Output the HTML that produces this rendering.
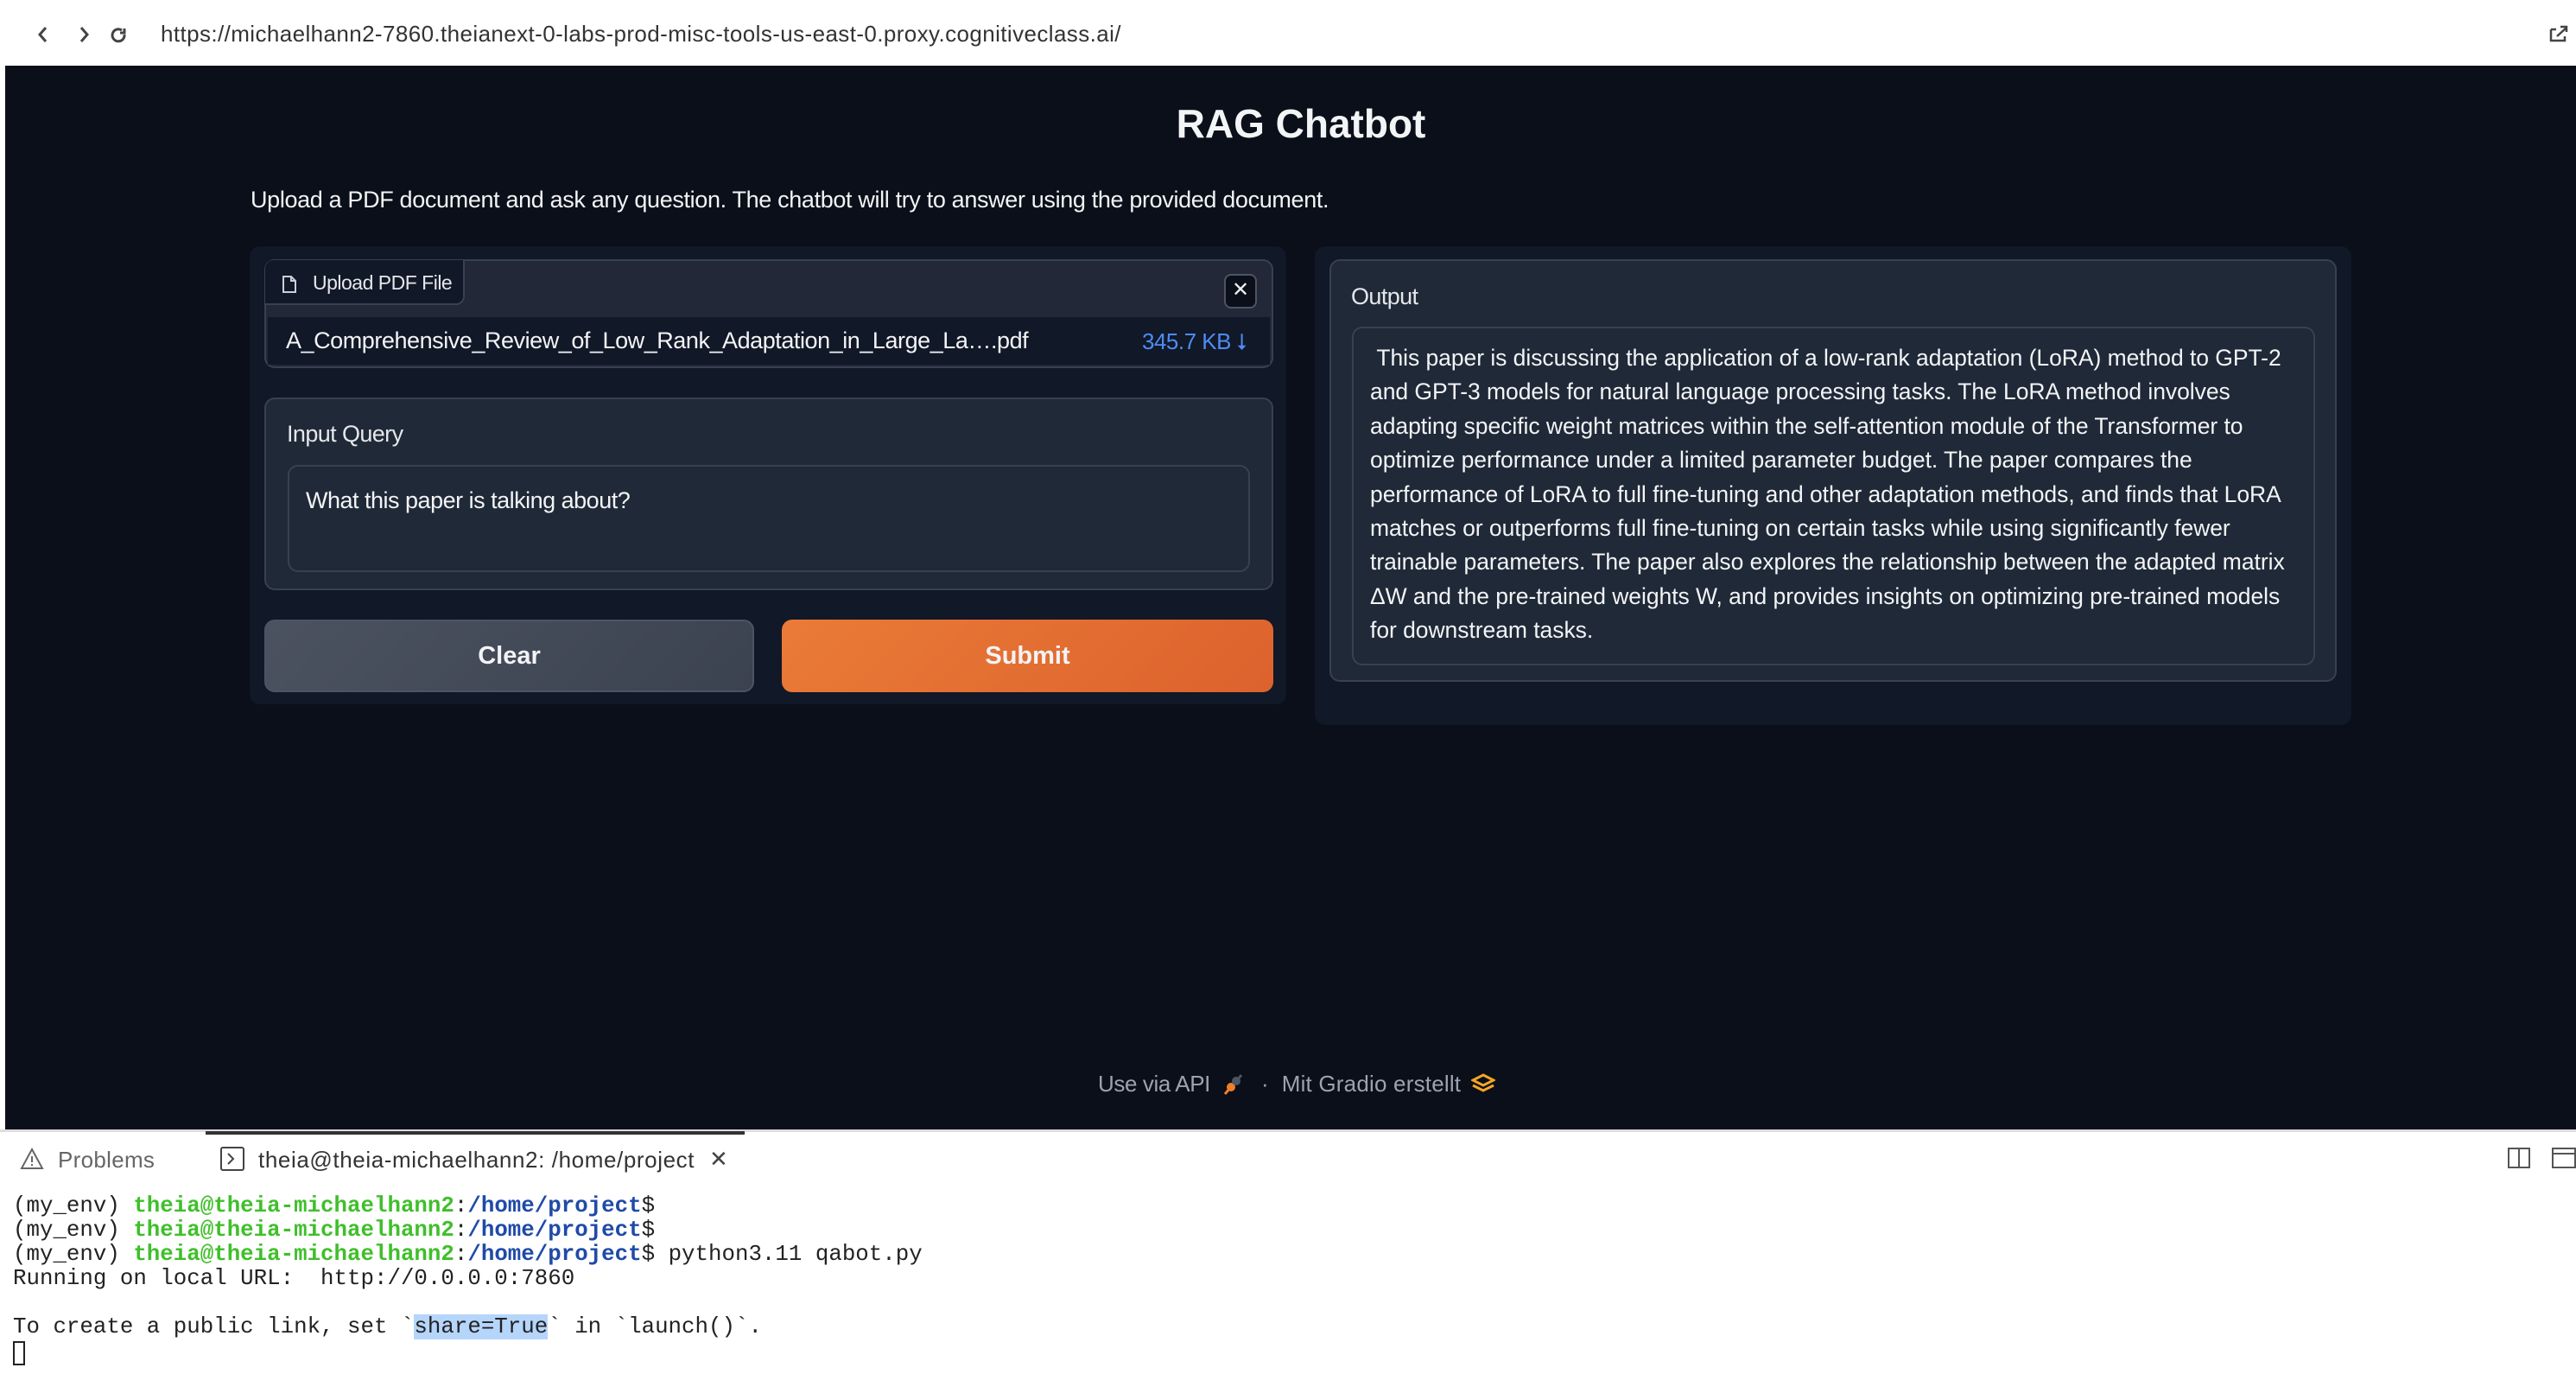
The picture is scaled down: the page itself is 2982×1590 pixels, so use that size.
<!DOCTYPE html>
<html><head><meta charset="utf-8"><style>
*{box-sizing:border-box;margin:0;padding:0}
body{width:2982px;height:1590px;background:#fff;position:relative;overflow:hidden;font-family:"Liberation Sans",sans-serif}
.a{position:absolute}
.dark{left:6px;top:76px;width:2976px;height:1231px;background:#0b0f19}
.t{white-space:nowrap;color:#f3f4f6}
.panel{background:#111827;border-radius:12px}
.block{background:#1f2937;border:2px solid #374151;border-radius:12px}
.ta{background:#1f2937;border:2px solid #374151;border-radius:12px}
.mono{font-family:"Liberation Mono",monospace;font-size:25.8px;white-space:pre;color:#222;line-height:28px}
.g{color:#3fbf2a;font-weight:bold}.b{color:#1f4aa8;font-weight:bold}
</style></head><body>
<svg class="a" style="left:38px;top:28px" width="120" height="24" viewBox="0 0 120 24" fill="none" stroke="#444" stroke-width="3"><path d="M15 4 L8 12 L15 20"/><path d="M56 4 L63 12 L56 20"/><path d="M103 7 a7 7 0 1 0 3 5"/><path d="M106 5 v5 h-5"/></svg>
<div class="a t" style="left:186px;top:24px;font-size:26px;color:#333;letter-spacing:0.4px">https://michaelhann2-7860.theianext-0-labs-prod-misc-tools-us-east-0.proxy.cognitiveclass.ai/</div>
<svg class="a" style="left:2950px;top:28px" width="24" height="22" fill="none" stroke="#444" stroke-width="2.5"><path d="M3 6h6M3 6v13h16v-5"/><path d="M10 14 L21 4 M14 3h7v6"/></svg>

<div class="a dark"></div>
<div class="a t" style="left:0;width:3012px;text-align:center;top:116px;font-size:46px;font-weight:bold">RAG Chatbot</div>
<div class="a t" style="left:290px;top:216px;font-size:27px;letter-spacing:-0.35px">Upload a PDF document and ask any question. The chatbot will try to answer using the provided document.</div>

<div class="a panel" style="left:289px;top:285px;width:1200px;height:530px"></div>
<div class="a block" style="left:306px;top:300px;width:1168px;height:126px;background:#222837"></div>
<div class="a" style="left:307px;top:301px;width:231px;height:52px;background:#111827;border:2px solid #374151;border-top:none;border-left:none;border-radius:10px 0 10px 0"></div>
<svg class="a" style="left:326px;top:318px" width="18" height="22" fill="none" stroke="#cbd0d8" stroke-width="2"><path d="M2 2h9l5 5v13H2z M11 2v5h5"/></svg>
<div class="a t" style="left:362px;top:314px;font-size:23px;color:#e5e7eb;letter-spacing:-0.5px">Upload PDF File</div>
<div class="a" style="left:1417px;top:317px;width:38px;height:40px;background:#0b0f19;border:2px solid #4b5563;border-radius:8px;color:#eee;font-size:24px;text-align:center;line-height:34px">✕</div>
<div class="a" style="left:310px;top:367px;width:1160px;height:55px;background:#111827"></div>
<div class="a t" style="left:331px;top:379px;font-size:27px;letter-spacing:-0.45px">A_Comprehensive_Review_of_Low_Rank_Adaptation_in_Large_La….pdf</div>
<div class="a t" style="left:1322px;top:380px;font-size:26px;color:#4d8cf5;letter-spacing:-0.5px">345.7 KB ⭣</div>

<div class="a block" style="left:306px;top:460px;width:1168px;height:223px"></div>
<div class="a t" style="left:332px;top:487px;font-size:27px;color:#e5e7eb;letter-spacing:-0.6px">Input Query</div>
<div class="a ta" style="left:333px;top:538px;width:1114px;height:124px"></div>
<div class="a t" style="left:354px;top:564px;font-size:27px;letter-spacing:-0.5px">What this paper is talking about?</div>

<div class="a" style="left:306px;top:717px;width:567px;height:84px;border-radius:12px;background:linear-gradient(135deg,#4b5260,#3b4250);border:2px solid #4b5563"></div>
<div class="a t" style="left:306px;width:567px;text-align:center;top:743px;font-size:29px;font-weight:bold">Clear</div>
<div class="a" style="left:905px;top:717px;width:569px;height:84px;border-radius:12px;background:linear-gradient(135deg,#ea7b37,#dc622d)"></div>
<div class="a t" style="left:905px;width:569px;text-align:center;top:743px;font-size:29px;font-weight:bold">Submit</div>

<div class="a panel" style="left:1522px;top:285px;width:1200px;height:554px"></div>
<div class="a block" style="left:1539px;top:300px;width:1166px;height:489px"></div>
<div class="a t" style="left:1564px;top:328px;font-size:27px;color:#e5e7eb;letter-spacing:-0.6px">Output</div>
<div class="a ta" style="left:1565px;top:378px;width:1115px;height:392px"></div>
<div class="a t" style="left:1586px;top:395px;font-size:26.5px;line-height:39.4px;letter-spacing:-0.05px">&nbsp;This paper is discussing the application of a low-rank adaptation (LoRA) method to GPT-2<br>and GPT-3 models for natural language processing tasks. The LoRA method involves<br>adapting specific weight matrices within the self-attention module of the Transformer to<br>optimize performance under a limited parameter budget. The paper compares the<br>performance of LoRA to full fine-tuning and other adaptation methods, and finds that LoRA<br>matches or outperforms full fine-tuning on certain tasks while using significantly fewer<br>trainable parameters. The paper also explores the relationship between the adapted matrix<br>ΔW and the pre-trained weights W, and provides insights on optimizing pre-trained models<br>for downstream tasks.</div>

<div class="a t" style="left:1271px;top:1239px;font-size:26px;color:#9ca3af;letter-spacing:-0.4px">Use via API</div>
<svg class="a" style="left:1414px;top:1242px" width="24" height="26"><path d="M4 24 L10 17" stroke="#f07f2a" stroke-width="3"/><circle cx="11" cy="16" r="5" fill="#f07f2a"/><circle cx="17" cy="9" r="5" fill="#4b5563"/><path d="M19 7 L23 2" stroke="#4b5563" stroke-width="3"/></svg>
<div class="a t" style="left:1460px;top:1239px;font-size:26px;color:#9ca3af;letter-spacing:0.2px">· &nbsp;Mit Gradio erstellt</div>
<svg class="a" style="left:1703px;top:1242px" width="28" height="24" fill="none" stroke="#f5a623" stroke-width="3"><path d="M14 2 L26 8 L14 14 L2 8Z"/><path d="M2 14 L14 20 L26 14"/></svg>

<div class="a" style="left:0;top:1307px;width:2982px;height:3px;background:#ddd"></div>
<div class="a" style="left:238px;top:1309px;width:624px;height:4px;background:#333"></div>
<svg class="a" style="left:23px;top:1328px" width="28" height="26" fill="none" stroke="#666" stroke-width="2"><path d="M14 2 L26 24 H2Z M14 10v7 M14 19v2"/></svg>
<div class="a t" style="left:67px;top:1327px;font-size:26px;color:#666;letter-spacing:0.3px">Problems</div>
<svg class="a" style="left:255px;top:1327px" width="28" height="28" fill="none" stroke="#444" stroke-width="2"><rect x="1" y="1" width="26" height="26" rx="2"/><path d="M9 8 L15 14 L9 20"/></svg>
<div class="a t" style="left:299px;top:1327px;font-size:26px;color:#333;letter-spacing:0.6px">theia@theia-michaelhann2: /home/project</div>
<div class="a t" style="left:821px;top:1326px;font-size:26px;color:#444">✕</div>
<svg class="a" style="left:2903px;top:1328px" width="79" height="24" fill="none" stroke="#555" stroke-width="2"><rect x="1" y="1" width="24" height="22"/><path d="M13 1v22"/><rect x="52" y="1" width="26" height="22"/><path d="M52 7h26"/></svg>

<div class="a mono" style="left:15px;top:1382px"><span>(my_env) </span><span class="g">theia@theia-michaelhann2</span>:<span class="b">/home/project</span>$
(my_env) <span class="g">theia@theia-michaelhann2</span>:<span class="b">/home/project</span>$
(my_env) <span class="g">theia@theia-michaelhann2</span>:<span class="b">/home/project</span>$ python3.11 qabot.py
Running on local URL:  http://0.0.0.0:7860

To create a public link, set `<span style="background:#b5d5fb">share=True</span>` in `launch()`.</div>
<div class="a" style="left:15px;top:1552px;width:14px;height:28px;border:2px solid #222"></div>
</body></html>
